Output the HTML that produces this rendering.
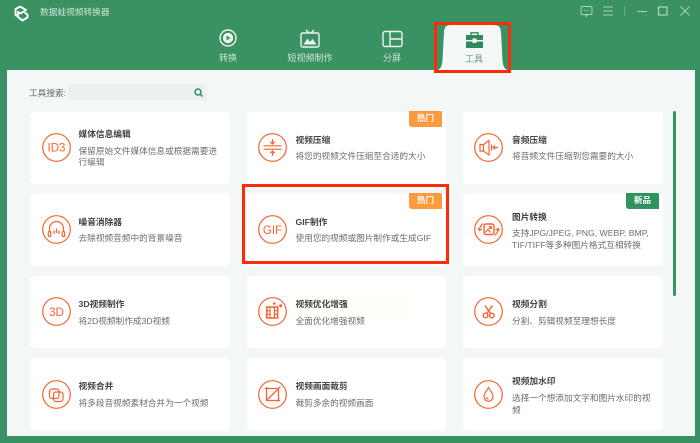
<!DOCTYPE html>
<html lang="zh">
<head>
<meta charset="utf-8">
<title>数据蛙视频转换器</title>
<style>
html,body{margin:0;padding:0}
body{width:700px;height:443px;overflow:hidden;position:relative;background:#3a9162;font-family:"Liberation Sans","Noto Sans CJK SC",sans-serif}
div,svg,span{position:absolute}
.panel{left:7px;top:70px;width:688px;height:366px;background:#f3f8f6}
.card{background:#fff;border-radius:4px;height:72px}
.c1{left:30px;width:200px}.c2{left:247px;width:199px}.c3{left:463px;width:200px}
.t,.d,.n{white-space:nowrap;line-height:12px;height:12px}
.t{font-size:8.7px;font-weight:700;color:#444}
.d{font-size:8.67px;color:#6c6c6c}
.n{font-size:9px;color:#cfe5d9;transform:translateX(-50%)}
.ic{width:29px;height:29px;fill:none;stroke:#f8622e;stroke-width:1.2}
.ic text{font-family:"Liberation Sans",sans-serif;fill:#f8622e;stroke:none;text-anchor:middle}
.b{width:33px;height:16px;line-height:15px;text-align:center;color:#fff;font-size:8.5px;font-weight:700;border-radius:0 2px 0 3px}
.or{background:#fd9a3e}.gr{background:#2f9360}
.red{box-sizing:border-box;border:3px solid #fb2b0b}
.w{fill:none;stroke:#a9d0bb;stroke-width:1}
.navi{fill:none;stroke:#e9f4ee;stroke-width:1.4}
</style>
</head>
<body>
<svg style="left:13px;top:4px" width="17" height="19" viewBox="0 0 17 19" fill="none" stroke="#fff" stroke-width="1.900" stroke-linejoin="round"><path d="M7 2.500 L2.500 5.200 V11 L5.500 12.800 M7 2.500 L13 6 L7.500 9.500 L5 8 V13 L9.500 16.500 L14.500 13.500 V10.500 L11.500 8.500"/></svg>
<div class="d" style="left:40px;top:6px;color:#cfe5d9;font-size:8.7px">数据蛙视频转换器</div>

<svg style="left:218px;top:28px" width="20" height="20" viewBox="0 0 20 20"><circle cx="10" cy="10" r="8" class="navi"/><circle cx="10" cy="10" r="5.2" fill="#e9f4ee"/><path d="M8.500 7.500 L12.500 10 L8.500 12.500Z" fill="#3a9162"/></svg>
<div class="n" style="left:228px;top:52px">转换</div>
<svg style="left:300px;top:29px" width="20" height="19" viewBox="0 0 20 19"><rect x="1" y="4" width="18" height="14" rx="1.500" class="navi"/><path d="M6 1 L9 4 M14 1 L11 4" class="navi"/><path d="M3.500 15.500 L7.500 9.500 L10 13 L12.500 10 L16.500 15.500Z" fill="#e9f4ee"/></svg>
<div class="n" style="left:310px;top:52px">短视频制作</div>
<svg style="left:382px;top:30px" width="21" height="18" viewBox="0 0 21 18"><rect x="1" y="1.500" width="19" height="15" rx="2" class="navi"/><path d="M8 1.500 V16.500 M8 9 H20" class="navi"/></svg>
<div class="n" style="left:392px;top:52px">分屏</div>

<svg style="left:580px;top:5px" width="13" height="13" viewBox="0 0 13 13"><rect x="1" y="1.500" width="11" height="8" rx="1.500" class="w"/><path d="M5 9.500 L6.500 11.500 L8 9.500" class="w"/><path d="M3.800 5.500h1M6 5.500h1M8.200 5.500h1" class="w"/></svg>
<svg style="left:602px;top:5px" width="12" height="12" viewBox="0 0 12 12"><path d="M1 2H11M1 6H11M1 10H11" class="w"/></svg>
<div style="left:624px;top:6px;width:1px;height:10px;background:#6eab8a"></div>
<svg style="left:636px;top:5px" width="12" height="12" viewBox="0 0 12 12"><path d="M1 6.500H11" class="w"/></svg>
<svg style="left:657px;top:5px" width="12" height="12" viewBox="0 0 12 12"><rect x="1.500" y="2" width="8.500" height="8" class="w" style="stroke-width:1.300"/></svg>
<svg style="left:679px;top:5px" width="12" height="12" viewBox="0 0 12 12"><path d="M1.500 1.500L10.500 10.500M10.500 1.500L1.500 10.500" class="w"/></svg>

<div class="panel"></div>

<svg style="left:436px;top:24px" width="73" height="47" viewBox="0 0 73 47"><path d="M0 47 C5 45 6 42 6.500 36 L8 8 C8.500 3 10 1 15 1 H58 C63 1 64.500 3 65 8 L66.500 36 C67 42 68 45 73 47Z" fill="#f3f8f6"/></svg>
<svg style="left:465px;top:31px" width="19" height="18" viewBox="0 0 19 18"><path d="M6 4V1.800H13V4" fill="none" stroke="#2f8a5d" stroke-width="1.400"/><path d="M1 4H18V9H11.500V7.500H7.500V9H1Z" fill="#2f8a5d"/><path d="M1 10.500H7.500V12H11.500V10.500H18V17H1Z" fill="#2f8a5d"/></svg>
<div class="n" style="left:474px;top:53px;color:#5f9e7e">工具</div>
<div class="red" style="left:434px;top:22px;width:77px;height:51px"></div>

<div class="d" style="left:29px;top:87px;color:#666">工具搜索:</div>
<div style="left:68px;top:84px;width:139px;height:16px;background:#ebf2ee;border-radius:2px"></div>
<svg style="left:193px;top:87px" width="11" height="11" viewBox="0 0 11 11" fill="none" stroke="#2f8f5f" stroke-width="1.500"><circle cx="5" cy="5" r="3"/><path d="M7.300 7.300L9.500 9.500"/></svg>

<div class="card c1" style="top:112px"></div>
<div class="card c2" style="top:112px"></div>
<div class="card c3" style="top:112px"></div>
<div class="card c1" style="top:194px"></div>
<div class="card c2" style="top:194px"></div>
<div class="card c3" style="top:194px"></div>
<div class="card c1" style="top:276px"></div>
<div class="card c2" style="top:276px"></div>
<div class="card c3" style="top:276px"></div>
<div class="card c1" style="top:358px"></div>
<div class="card c2" style="top:358px"></div>
<div class="card c3" style="top:358px"></div>

<div style="left:294px;top:292px;width:113px;height:29px;background:#fffef8"></div>

<svg class="ic" style="left:41.500px;top:133px" viewBox="0 0 29 29"><circle cx="14.500" cy="14.500" r="13.800"/><text x="14.500" y="18.500" font-size="11.500">ID3</text></svg>
<div class="t" style="left:78.500px;top:128px">媒体信息编辑</div>
<div class="d" style="left:78.500px;top:145px">保留原始文件媒体信息或根据需要进</div>
<div class="d" style="left:78.500px;top:156px">行编辑</div>

<svg class="ic" style="left:258px;top:133px" viewBox="0 0 29 29"><circle cx="14.500" cy="14.500" r="13.800"/><path d="M5.500 12.800H23.500M5.500 16.200H23.500M14.500 6V11M12.300 8.800L14.500 11L16.700 8.800M14.500 23V18M12.300 20.200L14.500 18L16.700 20.200"/></svg>
<div class="t" style="left:295.500px;top:134px">视频压缩</div>
<div class="d" style="left:295.500px;top:150px">将您的视频文件压缩至合适的大小</div>
<div class="b or" style="left:409px;top:111px">热门</div>

<svg class="ic" style="left:474px;top:133px" viewBox="0 0 29 29"><circle cx="14.500" cy="14.500" r="13.800"/><path d="M6 11.500H9.500V18H6ZM9.500 11.500L15 7.500V22L9.500 18M24 14.500H19M21 12.500L19 14.500L21 16.500M17.500 11.500V17.500"/></svg>
<div class="t" style="left:512px;top:134px">音频压缩</div>
<div class="d" style="left:512px;top:150px">将音频文件压缩到您需要的大小</div>

<svg class="ic" style="left:41.500px;top:215px" viewBox="0 0 29 29"><circle cx="14.500" cy="14.500" r="13.800"/><path d="M7.500 17V13.500A7 7 0 0 1 21.500 13.500V17"/><rect x="6.300" y="16.500" width="2.500" height="5" rx="1.200"/><rect x="20.200" y="16.500" width="2.500" height="5" rx="1.200"/><path d="M12 15.500V19M14.500 13.500V18M17 15.500V19"/></svg>
<div class="t" style="left:78.500px;top:216px">噪音消除器</div>
<div class="d" style="left:78.500px;top:232px">去除视频音频中的背景噪音</div>

<svg class="ic" style="left:258px;top:215px" viewBox="0 0 29 29"><circle cx="14.500" cy="14.500" r="13.800"/><text x="14.500" y="18.800" font-size="11.500">GIF</text></svg>
<div class="t" style="left:295.500px;top:216px">GIF制作</div>
<div class="d" style="left:295.500px;top:232px">使用您的视频或图片制作或生成GIF</div>
<div class="b or" style="left:409px;top:193px">热门</div>

<svg class="ic" style="left:474px;top:215px" viewBox="0 0 29 29"><circle cx="14.500" cy="14.500" r="13.800"/><rect x="10" y="9" width="10" height="10.500" rx="2" stroke-width="1.400"/><circle cx="16.500" cy="12.500" r="1"/><path d="M11 17.500L14 14.500L16.500 17.500M5.500 15A9 9 0 0 1 9 8.500M24 14A9 9 0 0 1 20.500 20.500M4 13L5.500 15.500L8 14M25.500 16L24 13.500L21.500 15"/></svg>
<div class="t" style="left:512px;top:211px">图片转换</div>
<div class="d" style="left:512px;top:227px">支持JPG/JPEG, PNG, WEBP, BMP,</div>
<div class="d" style="left:512px;top:239px">TIF/TIFF等多种图片格式互相转换</div>
<div class="b gr" style="left:626px;top:193px">新品</div>

<svg class="ic" style="left:41.500px;top:297px" viewBox="0 0 29 29"><circle cx="14.500" cy="14.500" r="13.800"/><text x="14.500" y="18.800" font-size="11.500">3D</text></svg>
<div class="t" style="left:78.500px;top:298px">3D视频制作</div>
<div class="d" style="left:78.500px;top:315px">将2D视频制作成3D视频</div>

<svg class="ic" style="left:258px;top:297px" viewBox="0 0 29 29"><circle cx="14.500" cy="14.500" r="13.800"/><rect x="8.700" y="10" width="11" height="11" stroke-width="1.500"/><path d="M12 10V21M16.400 10V21M8.700 13.700H12M8.700 17.300H12M16.400 13.700H19.700M16.400 17.300H19.700"/><circle cx="16.300" cy="6.500" r=".7" fill="#f8622e"/><circle cx="22.700" cy="8.800" r="1" fill="#f8622e"/></svg>
<div class="t" style="left:295.500px;top:298px">视频优化增强</div>
<div class="d" style="left:295.500px;top:315px">全面优化增强视频</div>

<svg class="ic" style="left:474px;top:297px" viewBox="0 0 29 29"><circle cx="14.500" cy="14.500" r="13.800"/><circle cx="11.500" cy="18.500" r="2.300" stroke-width="1.400"/><circle cx="17.800" cy="18.500" r="2.300" stroke-width="1.400"/><path d="M16.500 16.500L11 8.500M12.800 16.500L18.500 8.500" stroke-width="1.400"/></svg>
<div class="t" style="left:512px;top:298px">视频分割</div>
<div class="d" style="left:512px;top:315px">分割、剪辑视频至理想长度</div>

<svg class="ic" style="left:41.500px;top:380px" viewBox="0 0 29 29"><circle cx="14.500" cy="14.500" r="13.800"/><rect x="7.500" y="9" width="9.500" height="9.500" rx="2.500"/><rect x="11.500" y="12" width="9.500" height="9.500" rx="2.500"/></svg>
<div class="t" style="left:78.500px;top:380px">视频合并</div>
<div class="d" style="left:78.500px;top:397px">将多段音视频素材合并为一个视频</div>

<svg class="ic" style="left:258px;top:380px" viewBox="0 0 29 29"><circle cx="14.500" cy="14.500" r="13.800"/><path d="M7 8.500H20.500V21.500M8.500 7V20.500H22M9.500 19.500L19.500 9.500" stroke-width="1.300"/><path d="M20.500 8.500L22.500 6.500"/></svg>
<div class="t" style="left:295.500px;top:380px">视频画面裁剪</div>
<div class="d" style="left:295.500px;top:397px">裁剪多余的视频画面</div>

<svg class="ic" style="left:474px;top:380px" viewBox="0 0 29 29"><circle cx="14.500" cy="14.500" r="13.800"/><path d="M14.500 7.500C12.500 11 10 13.500 10 16.800A4.500 4.500 0 0 0 19 16.800C19 13.500 16.500 11 14.500 7.500Z"/><path d="M12.500 17A2 2 0 0 0 14.500 19"/></svg>
<div class="t" style="left:512px;top:375px">视频加水印</div>
<div class="d" style="left:512px;top:391.500px">选择一个想添加文字和图片水印的视</div>
<div class="d" style="left:512px;top:403.500px">频</div>

<div style="left:673px;top:111px;width:3px;height:185px;background:#3a9162;border-radius:2px"></div>
<div class="red" style="left:242px;top:184px;width:207px;height:80px"></div>
</body>
</html>
